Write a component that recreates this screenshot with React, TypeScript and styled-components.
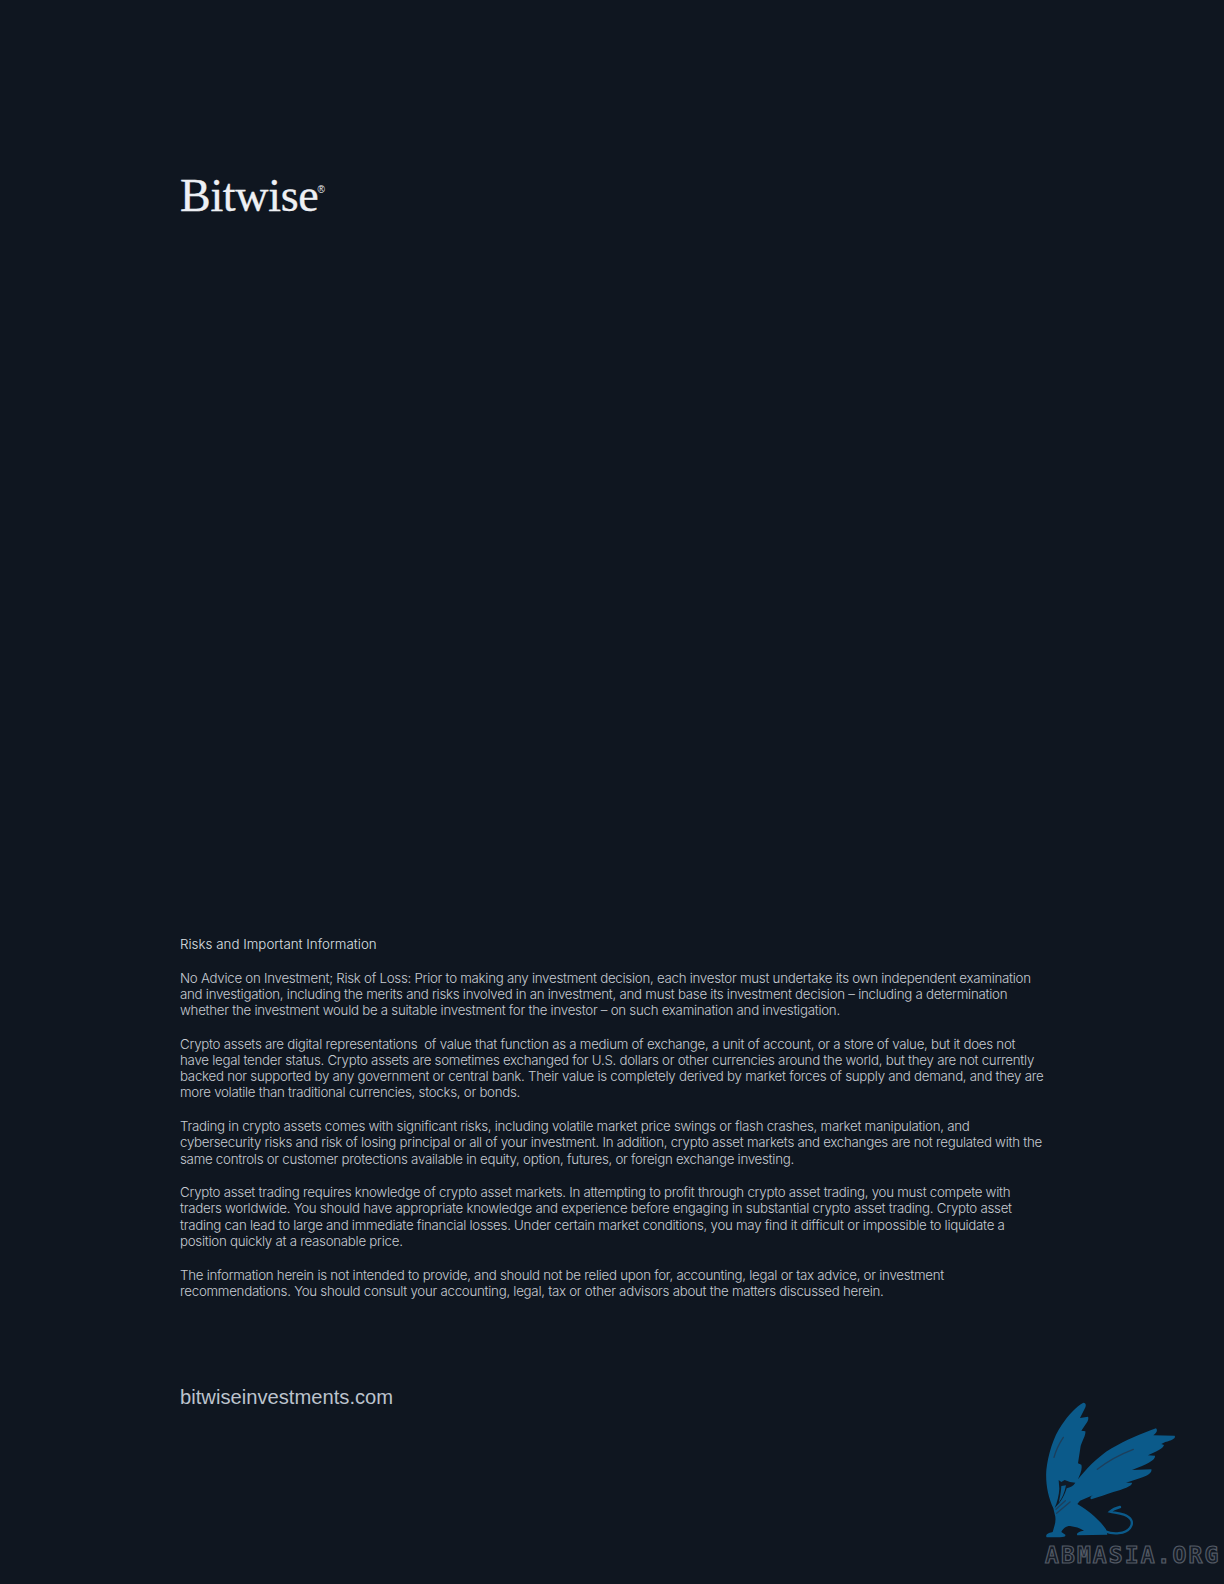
import React from "react";
import styled, { createGlobalStyle } from "styled-components";

const Global = createGlobalStyle`
  html, body { margin: 0; padding: 0; background: #0f1620; }
`;

const Page = styled.main`
  position: relative;
  box-sizing: border-box;
  width: 1224px;
  height: 1584px;
  padding: 168px 0 0 180px;
  background: #0f1620;
  overflow: hidden;
  display: flex;
  flex-direction: column;
`;

const Logo = styled.div`
  font-family: "Liberation Serif", serif;
  font-size: 46px;
  line-height: 56px;
  letter-spacing: -0.3px;
  color: #eef0f4;
  -webkit-text-stroke: 0.35px #eef0f4;
  display: flex;
  align-items: flex-start;
`;

const Reg = styled.span`
  font-family: "Liberation Sans", sans-serif;
  font-size: 10px;
  line-height: 10px;
  margin: 17px 0 0 -1px;
  letter-spacing: 0;
  -webkit-text-stroke: 0;
`;

const Legal = styled.section`
  margin-top: 712px;
  display: flex;
  flex-direction: column;
  gap: 17.5px;
  font-family: Inter, sans-serif;
  font-size: 13.3px;
  font-weight: 300;
  line-height: 16.2px;
  letter-spacing: -0.27px;
  color: #c6cbd2;
`;

const Heading = styled.h2`
  margin: 0;
  font: inherit;
  letter-spacing: 0.03px;
  color: #dde0e5;
`;

const Para = styled.p`
  margin: 0;
  white-space: pre;
`;

const Site = styled.div`
  margin-top: 85px;
  font-family: "Liberation Sans", sans-serif;
  font-size: 20.2px;
  line-height: 26px;
  color: #bcc3cd;
`;

const Watermark = styled.div`
  position: absolute;
  right: 0;
  bottom: 0;
  width: 204px;
  height: 204px;
`;

const Griffin = styled.svg`
  display: block;
  width: 204px;
  height: 204px;
`;

const Mark = styled.div`
  position: absolute;
  left: 25px;
  top: 162px;
  font-family: "DejaVu Sans Mono", monospace;
  font-size: 23px;
  font-weight: 700;
  line-height: 26px;
  letter-spacing: 2.1px;
  color: #141b25;
  -webkit-text-stroke: 1.2px #535a65;
  white-space: nowrap;
`;

const paragraphs = [
  [
    "No Advice on Investment; Risk of Loss: Prior to making any investment decision, each investor must undertake its own independent examination",
    "and investigation, including the merits and risks involved in an investment, and must base its investment decision – including a determination",
    "whether the investment would be a suitable investment for the investor – on such examination and investigation.",
  ],
  [
    "Crypto assets are digital representations  of value that function as a medium of exchange, a unit of account, or a store of value, but it does not",
    "have legal tender status. Crypto assets are sometimes exchanged for U.S. dollars or other currencies around the world, but they are not currently",
    "backed nor supported by any government or central bank. Their value is completely derived by market forces of supply and demand, and they are",
    "more volatile than traditional currencies, stocks, or bonds.",
  ],
  [
    "Trading in crypto assets comes with significant risks, including volatile market price swings or flash crashes, market manipulation, and",
    "cybersecurity risks and risk of losing principal or all of your investment. In addition, crypto asset markets and exchanges are not regulated with the",
    "same controls or customer protections available in equity, option, futures, or foreign exchange investing.",
  ],
  [
    "Crypto asset trading requires knowledge of crypto asset markets. In attempting to profit through crypto asset trading, you must compete with",
    "traders worldwide. You should have appropriate knowledge and experience before engaging in substantial crypto asset trading. Crypto asset",
    "trading can lead to large and immediate financial losses. Under certain market conditions, you may find it difficult or impossible to liquidate a",
    "position quickly at a reasonable price.",
  ],
  [
    "The information herein is not intended to provide, and should not be relied upon for, accounting, legal or tax advice, or investment",
    "recommendations. You should consult your accounting, legal, tax or other advisors about the matters discussed herein.",
  ],
];

export default function App() {
  return (
    <Page>
      <Global />
      <Logo>
        Bitwise<Reg>®</Reg>
      </Logo>
      <Legal>
        <Heading>Risks and Important Information</Heading>
        {paragraphs.map((lines, i) => (
          <Para key={i}>{lines.join("\n")}</Para>
        ))}
      </Legal>
      <Site>bitwiseinvestments.com</Site>
      <Watermark>
        <Griffin viewBox="0 0 612 612">
          <path
            fill="#0b5a8a"
            d="M100 385 C84 350 76 310 79 270 C84 225 100 170 125 135 C145 105 170 78 190 68 C199 68 199 78 194 86 L180 114 L204 110 C207 116 203 126 196 134 L184 152 L196 154 C198 164 188 180 182 198 L174 250 L184 254 C188 268 180 284 174 298 C195 272 232 230 275 205 C315 182 365 160 408 145 C414 150 410 160 400 166 L464 167 C468 174 458 180 436 186 L424 192 L432 195 C430 206 406 216 384 226 L405 227 C408 240 380 254 336 270 L394 268 C398 280 378 290 350 298 L318 308 L336 308 C338 318 310 328 280 336 C260 342 235 352 214 358 C208 354 212 348 222 344 L180 362 L172 372 C200 388 240 420 258 448 L262 464 L172 466 C168 460 176 454 192 452 C180 444 165 440 150 438 C138 438 128 446 124 456 L136 464 C138 470 132 472 120 472 L80 472 C76 466 80 460 98 456 C104 436 110 420 104 402 Z"
          />
          <path
            fill="none"
            stroke="#0b5a8a"
            strokeWidth="7"
            strokeLinecap="round"
            d="M256 454 C280 464 316 462 330 444 C342 428 334 412 312 404 C296 399 282 398 270 395 C278 388 288 384 300 381"
          />
          <path
            fill="none"
            stroke="#1d3f5c"
            strokeWidth="4"
            strokeLinecap="round"
            d="M102 232 C108 210 118 190 130 172 M232 268 C262 244 298 224 340 208 M108 388 L136 362 M110 400 L150 366"
          />
          <path
            fill="#101a26"
            d="M116 300 L124 306 L134 300 L150 306 L166 308 C160 318 150 322 140 325 C134 345 124 366 104 384 C112 366 117 345 118 326 Z"
          />
          <path
            fill="#0b5a8a"
            d="M124 318 L138 316 C134 338 126 356 116 368 C120 352 123 335 124 318 Z"
          />
        </Griffin>
        <Mark>ABMASIA.ORG</Mark>
      </Watermark>
    </Page>
  );
}
